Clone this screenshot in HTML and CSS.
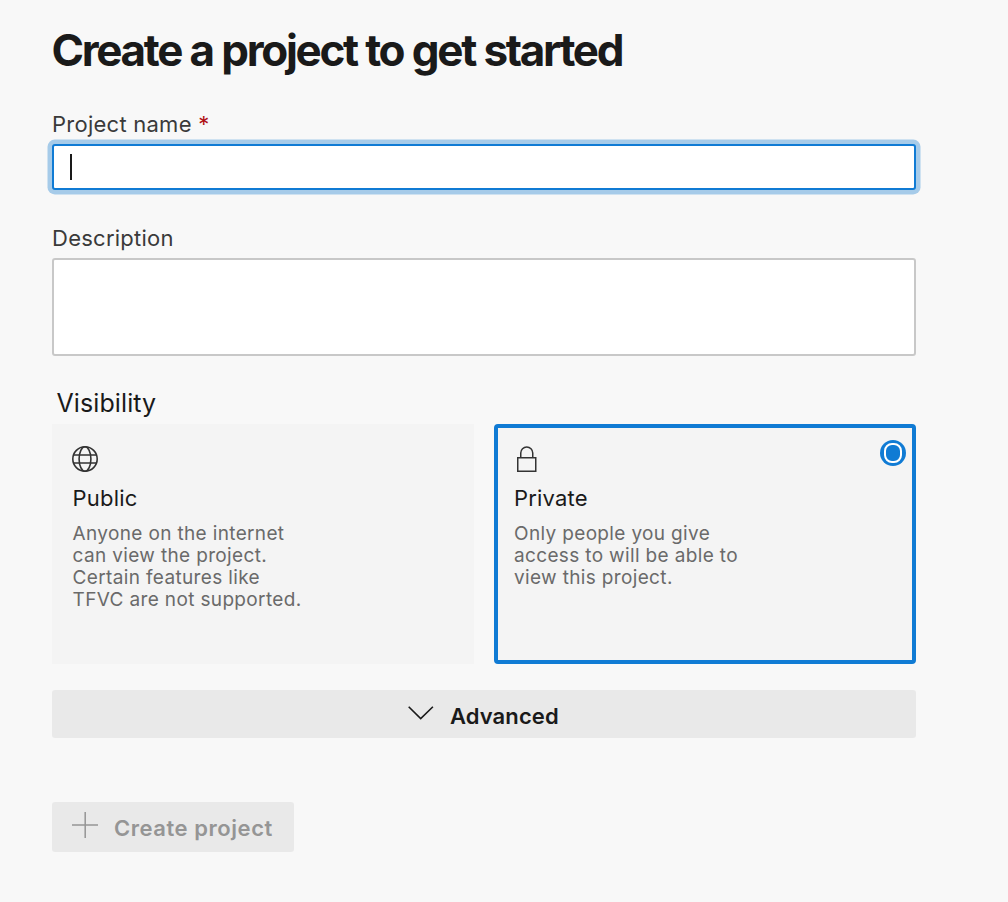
FILE: index.html
```html
<!DOCTYPE html>
<html lang="en">
<head>
<meta charset="utf-8">
<title>Create a project</title>
<link rel="stylesheet" href="styles.css">
</head>
<body>
<main class="page">
  <h1 class="title">Create a project to get started</h1>
  <div class="label">Project name <span class="required">*</span></div>
  <div class="input focused"><span class="caret"></span></div>
  <div class="label">Description</div>
  <div class="input textarea"></div>
  <h2 class="heading">Visibility</h2>
  <div class="cards">
    <section class="card">
      <svg class="card-icon" width="26" height="26" viewBox="0 0 26 26" fill="none" stroke="#333" stroke-width="1.6">
        <circle cx="13" cy="13" r="12.2"/>
        <ellipse cx="13" cy="13" rx="5.9" ry="12.2"/>
        <path d="M1.5 9h23M1.5 17h23"/>
      </svg>
      <h3 class="card-title">Public</h3>
      <p class="card-text">Anyone on the internet<br>can view the project.<br>Certain features like<br>TFVC are not supported.</p>
    </section>
    <section class="card selected">
      <svg class="card-icon" width="26" height="26" viewBox="0 0 26 26" fill="none" stroke="#333" stroke-width="1.5">
        <path d="M3.75 11.75h18v13.5h-18zM6.75 11.75V7a6 6 0 0 1 12 0v4.75"/>
      </svg>
      <h3 class="card-title">Private</h3>
      <p class="card-text">Only people you give<br>access to will be able to<br>view this project.</p>
      <span class="radio"><span class="radio-dot"></span></span>
    </section>
  </div>
  <div class="button advanced">
    <svg width="26" height="14" viewBox="0 0 26 14" fill="none" stroke="#1a1a1a" stroke-width="1.6"><path d="M.7.7 12.7 12.6 24.9.7"/></svg>
    <span class="advanced-text">Advanced</span>
  </div>
  <div class="button create">
    <svg width="26" height="26" viewBox="0 0 26 26" fill="none" stroke="#959595" stroke-width="1.5"><path d="M13.2 0v26M0 13h26"/></svg>
    <span class="create-text">Create project</span>
  </div>
</main>
</body>
</html>
```
FILE: styles.css
```css
* { box-sizing: border-box; }
body {
  margin: 0;
  background: #f8f8f8;
  color: #1a1a1a;
  font-family: Inter, "Liberation Sans", sans-serif;
}
.page { width: 916px; padding: 22px 0 0 52px; }
.title {
  margin: 0 0 31px;
  font-size: 44px;
  font-weight: 700;
  line-height: 56px;
  letter-spacing: -2.32px;
  word-spacing: .4px;
  text-indent: -.5px;
  white-space: nowrap;
}
.label {
  height: 35px;
  line-height: 30px;
  font-size: 22px;
  letter-spacing: .25px;
  color: #3a3a3a;
}
.required { color: #b01015; }
.input {
  height: 46px;
  border: 2px solid #c8c8c8;
  border-radius: 3px;
  background: #fff;
}
.focused {
  display: flex;
  align-items: center;
  padding-left: 16px;
  margin-bottom: 33px;
  border-color: #107bd4;
  box-shadow: 0 0 0 4.5px #a6cbe9;
}
.caret { width: 2px; height: 26px; background: #1a1a1a; }
.textarea { height: 98px; }
.heading {
  margin: 30px 0 0 4.5px;
  height: 38px;
  line-height: 34px;
  font-size: 25px;
  font-weight: 400;
  letter-spacing: .1px;
}
.cards { display: grid; grid-template-columns: 422px 422px; gap: 20px; }
.card {
  position: relative;
  height: 240px;
  padding: 22px 20px;
  background: #f4f4f4;
}
.selected { padding: 18px 16px; border: 4px solid #107bd4; border-radius: 4px; }
.card-icon { display: block; }
.card-title {
  margin: 11px 0 10px;
  font-size: 22px;
  font-weight: 400;
  line-height: 30px;
  letter-spacing: .2px;
}
.card-text {
  margin: 0;
  font-size: 19px;
  line-height: 22px;
  letter-spacing: .35px;
  color: #6a6a6a;
  white-space: nowrap;
}
.card:not(.selected) .card-title,
.card:not(.selected) .card-text { padding-left: .6px; }
.radio {
  position: absolute;
  top: 12px;
  right: 6px;
  display: grid;
  place-items: center;
  width: 26px;
  height: 26px;
  border-radius: 50%;
  background: #107bd4;
}
.radio-dot {
  width: 18px;
  height: 20px;
  border: 2px solid #fff;
  border-radius: 8px;
}
.button {
  display: flex;
  background: #e9e9e9;
  border-radius: 3px;
  font-size: 22px;
  font-weight: 600;
  white-space: nowrap;
}
.advanced { height: 48px; margin-top: 26px; padding: 16px 0 0 356px; gap: 16px; }
.advanced-text { margin-top: -5px; line-height: 30px; letter-spacing: .1px; }
.create { width: 242px; height: 50px; margin-top: 64px; padding: 10px 0 0 20px; gap: 16px; color: #959595; }
.create-text { margin-top: 1px; line-height: 30px; letter-spacing: .55px; }
```
